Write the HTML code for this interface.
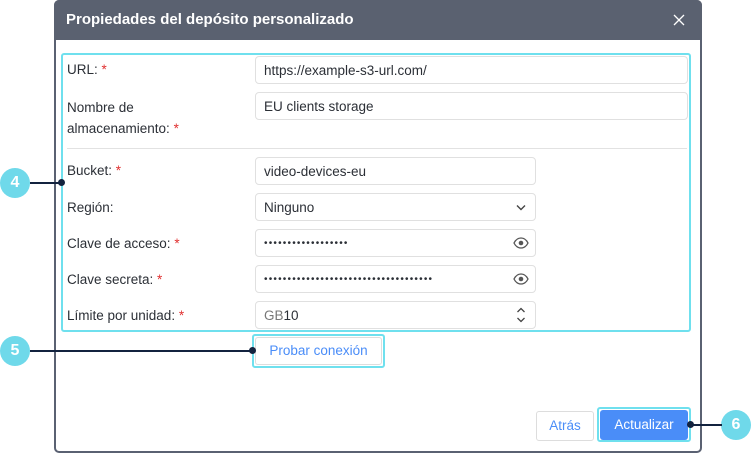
<!DOCTYPE html>
<html><head><meta charset="utf-8"><style>
*{box-sizing:border-box;margin:0;padding:0}
body{width:753px;height:454px;background:#fff;position:relative;overflow:hidden;font-family:"Liberation Sans",sans-serif;font-size:13px;color:#2b2f36}
.a{position:absolute}
.dlg{left:54px;top:0;width:648px;height:453px;border:2px solid #5a6172;border-radius:5px;background:#fff}
.hdr{left:54px;top:0;width:648px;height:40px;background:#5a6170;border-radius:5px 5px 0 0}
.hdr span{position:absolute;left:12px;top:11px;color:#fff;font-size:15px;font-weight:bold}
.lbl{font-size:13.5px;color:#2b2f36}
.req{color:#e03030}
.in{border:1px solid #e0e0e0;border-radius:4px;background:#fff;height:28px;padding:6px 8px;font-size:13.5px;color:#2b2f36;white-space:nowrap;overflow:hidden}
.pw{font-size:10px;letter-spacing:1.2px;padding-top:8px}
.cy{border:2px solid #6fe0ee;border-radius:3px}
.c{width:30px;height:30px;border-radius:50%;background:#6fd9ea;color:#fff;font-weight:bold;font-size:16px;text-align:center;line-height:30px}
.ln{height:2px;background:#13233f}
.dot{width:7px;height:7px;border-radius:50%;background:#13233f}
.eye{right:6px;top:6px}
</style></head><body>
<div class="a dlg"></div>
<div class="a hdr"><span>Propiedades del depósito personalizado</span>
<svg class="a" style="left:619px;top:14px" width="12" height="12" viewBox="0 0 12 12"><path d="M1 1L11 11M11 1L1 11" stroke="#fff" stroke-width="1.3"/></svg></div>

<div class="a cy" style="left:61px;top:53px;width:630px;height:279px"></div>

<div class="a lbl" style="left:67px;top:62px">URL: <span class="req">*</span></div>
<div class="a in" style="left:255px;top:56px;width:433px">https://example-s3-url.com/</div>
<div class="a lbl" style="left:67px;top:97px;line-height:21px">Nombre de<br>almacenamiento: <span class="req">*</span></div>
<div class="a in" style="left:255px;top:92px;width:433px">EU clients storage</div>
<div class="a" style="left:67px;top:148px;width:620px;height:1px;background:#e2e2e2"></div>

<div class="a lbl" style="left:67px;top:163px">Bucket: <span class="req">*</span></div>
<div class="a in" style="left:255px;top:157px;width:281px">video-devices-eu</div>
<div class="a lbl" style="left:67px;top:200px">Región:</div>
<div class="a in" style="left:255px;top:193px;width:281px">Ninguno
<svg class="a" style="right:9px;top:10px" width="10" height="7" viewBox="0 0 10 7"><path d="M1 1.5L5 5.5L9 1.5" stroke="#444" stroke-width="1.4" fill="none"/></svg></div>
<div class="a lbl" style="left:67px;top:236px">Clave de acceso: <span class="req">*</span></div>
<div class="a in pw" style="left:255px;top:229px;width:281px">••••••••••••••••••
<svg class="a eye" width="16" height="14" viewBox="0 0 16 14"><path d="M1 7C3 3 5.5 2 8 2s5 1 7 5c-2 4-4.5 5-7 5S3 11 1 7z" stroke="#555" stroke-width="1.3" fill="none"/><circle cx="8" cy="7" r="2.3" fill="#555"/></svg></div>
<div class="a lbl" style="left:67px;top:272px">Clave secreta: <span class="req">*</span></div>
<div class="a in pw" style="left:255px;top:265px;width:281px">••••••••••••••••••••••••••••••••••••
<svg class="a eye" width="16" height="14" viewBox="0 0 16 14"><path d="M1 7C3 3 5.5 2 8 2s5 1 7 5c-2 4-4.5 5-7 5S3 11 1 7z" stroke="#555" stroke-width="1.3" fill="none"/><circle cx="8" cy="7" r="2.3" fill="#555"/></svg></div>
<div class="a lbl" style="left:67px;top:308px">Límite por unidad: <span class="req">*</span></div>
<div class="a in" style="left:255px;top:301px;width:281px"><span style="color:#777">GB</span>10
<svg class="a" style="right:9px;top:5px" width="10" height="16" viewBox="0 0 10 16"><path d="M1.5 5L5 1.5L8.5 5M1.5 11L5 14.5L8.5 11" stroke="#444" stroke-width="1.3" fill="none"/></svg></div>

<div class="a cy" style="left:252px;top:334px;width:133px;height:34px"></div>
<div class="a" style="left:255px;top:337px;width:127px;height:28px;border:1px solid #ddd;border-radius:3px;color:#4a8df8;text-align:center;line-height:26px;font-size:13.5px">Probar conexión</div>

<div class="a" style="left:536px;top:411px;width:58px;height:30px;border:1px solid #ddd;border-radius:3px;color:#4a8df8;text-align:center;line-height:28px;font-size:13.5px">Atrás</div>
<div class="a cy" style="left:597px;top:407px;width:94px;height:35px"></div>
<div class="a" style="left:600px;top:410px;width:88px;height:30px;background:#4a8df8;border-radius:3px;color:#fff;text-align:center;line-height:30px;font-size:13.5px">Actualizar</div>

<div class="a c" style="left:0;top:168px">4</div>
<div class="a ln" style="left:30px;top:182px;width:31px"></div>
<div class="a dot" style="left:58px;top:179px"></div>
<div class="a c" style="left:0;top:336px">5</div>
<div class="a ln" style="left:30px;top:350px;width:222px"></div>
<div class="a dot" style="left:249px;top:347px"></div>
<div class="a c" style="left:721px;top:410px">6</div>
<div class="a ln" style="left:691px;top:424px;width:31px"></div>
<div class="a dot" style="left:687px;top:421px"></div>
</body></html>
